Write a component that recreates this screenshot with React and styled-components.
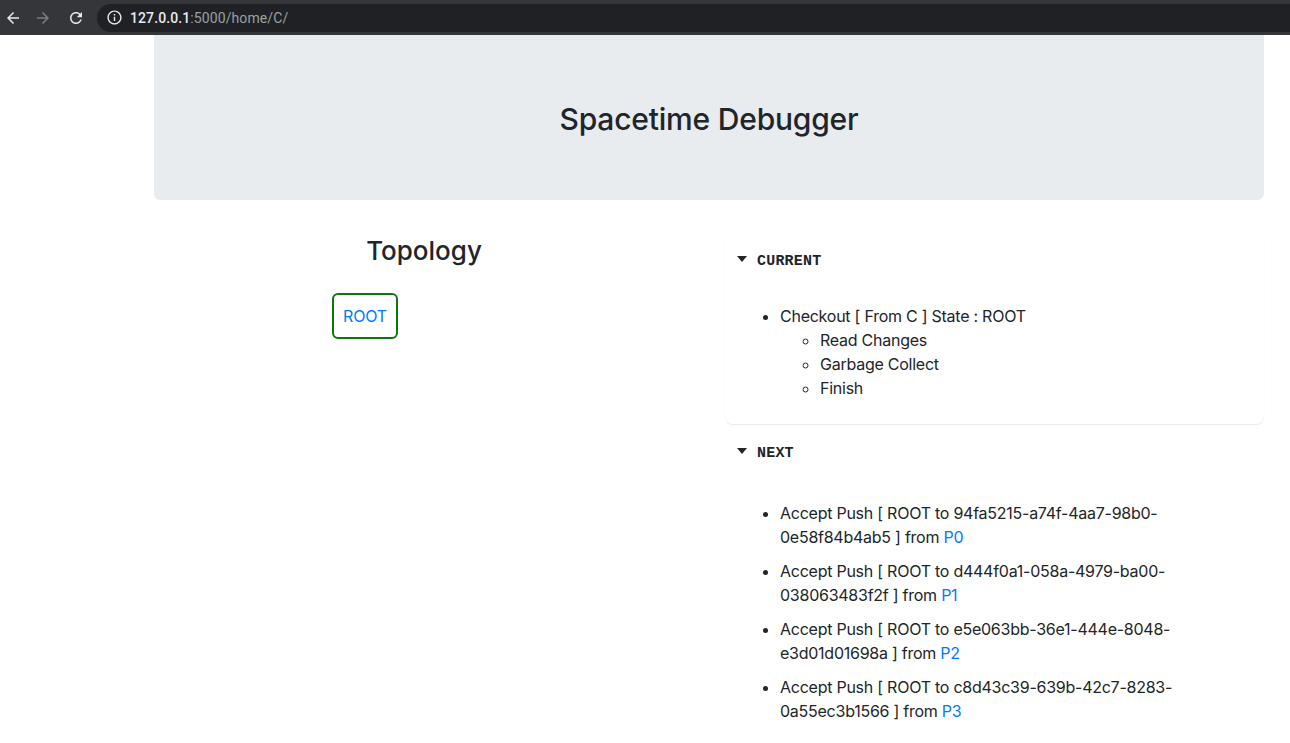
import React from 'react';
import styled, { createGlobalStyle } from 'styled-components';

const GlobalStyle = createGlobalStyle`
  body {
    margin: 0;
    background: #ffffff;
    color: #212529;
    font-family: Inter, "Noto Sans", sans-serif;
    font-size: 16px;
    line-height: 24px;
  }
`;

const BrowserBar = styled.div`
  height: 35px;
  box-sizing: border-box;
  background: #35363a;
  display: flex;
  align-items: center;
  padding-left: 0;
`;

const NavButton = styled.button`
  width: 26px;
  height: 28px;
  margin-right: ${(props) => props.gap || 2}px;
  border: none;
  background: transparent;
  padding: 0;
  display: flex;
  align-items: center;
  justify-content: center;
  color: ${(props) => (props.dim ? '#7c7e82' : '#e8eaed')};
`;

const AddressField = styled.div`
  flex: 1;
  height: 28px;
  margin-left: 6px;
  background: #202124;
  border-radius: 14px 0 0 14px;
  display: flex;
  align-items: center;
  padding-left: 9px;
  color: #9aa0a6;
  font-family: Roboto, "Noto Sans", sans-serif;
  font-size: 14px;
  letter-spacing: 0.1px;
`;

const InfoIcon = styled.span`
  display: flex;
  color: #e8eaed;
  margin-right: 7px;
`;

const Host = styled.span`
  color: #e8eaed;
  font-weight: 500;
`;

const Jumbotron = styled.header`
  margin-left: 154px;
  width: 1110px;
  background: #e9ecef;
  border-radius: 0 0 6px 6px;
  padding: 65px 0 61px;
  text-align: center;
`;

const Title = styled.h1`
  margin: 0;
  font-size: 30px;
  line-height: 39px;
  font-weight: 500;
  color: #212529;
  letter-spacing: -0.2px;
`;

const Row = styled.main`
  margin-left: 154px;
  width: 1110px;
  margin-top: 33px;
  display: grid;
  grid-template-columns: 540px 539px;
  column-gap: 31px;
  align-items: start;
`;

const GraphColumn = styled.section`
  text-align: center;
`;

const SectionTitle = styled.h3`
  margin: 2px 0 0;
  font-size: 26px;
  line-height: 32px;
  font-weight: 500;
`;

const Canvas = styled.div`
  margin-top: 26px;
  text-align: left;
  height: 200px;
`;

const Node = styled.a`
  display: inline-flex;
  align-items: center;
  justify-content: center;
  margin-left: 178px;
  width: 66px;
  height: 46px;
  box-sizing: border-box;
  border: 2px solid #0b7a0b;
  border-radius: 6px;
  color: #007bff;
  font-size: 16px;
  letter-spacing: -0.2px;
  text-decoration: none;
`;

const Panel = styled.section`
  display: flex;
  flex-direction: column;
  margin-top: -1px;
`;

const Card = styled.details`
  padding: 16px 12px ${(props) => props.bottom}px;
  border-radius: 0 0 8px 8px;
  box-shadow: ${(props) => (props.edge ? '0 1px 1px rgba(0, 0, 0, 0.09)' : 'none')};
`;

const Summary = styled.summary`
  list-style: none;
  display: flex;
  align-items: center;
  margin-top: 2px;
  font-family: "Liberation Mono", "DejaVu Sans Mono", monospace;
  font-weight: 700;
  font-size: 15px;
  line-height: 24px;
  letter-spacing: 0.2px;
  cursor: pointer;

  &::-webkit-details-marker {
    display: none;
  }

  &::before {
    content: '';
    width: 0;
    height: 0;
    border-left: 5px solid transparent;
    border-right: 5px solid transparent;
    border-top: 6px solid #212529;
    margin-right: 10px;
    margin-bottom: 6px;
  }
`;

const List = styled.ul`
  margin: ${(props) => props.top}px 0 0;
  padding-left: 43px;
  max-width: 430px;
  list-style: disc;
  letter-spacing: -0.25px;
`;

const SubList = styled.ul`
  margin: 0;
  padding-left: 40px;
  list-style: circle;
`;

const Item = styled.li`
  margin-bottom: ${(props) => props.space || 0}px;
`;

const Link = styled.a`
  color: #007bff;
  text-decoration: none;
`;

const pushes = [
  { to: '94fa5215-a74f-4aa7-98b0-0e58f84b4ab5', from: 'P0' },
  { to: 'd444f0a1-058a-4979-ba00-038063483f2f', from: 'P1' },
  { to: 'e5e063bb-36e1-444e-8048-e3d01d01698a', from: 'P2' },
  { to: 'c8d43c39-639b-42c7-8283-0a55ec3b1566', from: 'P3' },
];

const Icon = ({ d, size = 18 }) => (
  <svg width={size} height={size} viewBox="0 0 24 24" fill="currentColor">
    <path d={d} />
  </svg>
);

export default function App() {
  return (
    <>
      <GlobalStyle />
      <BrowserBar>
        <NavButton gap={4}>
          <Icon d="M20 11H7.83l5.59-5.59L12 4l-8 8 8 8 1.41-1.41L7.83 13H20v-2z" />
        </NavButton>
        <NavButton dim gap={7}>
          <Icon d="M12 4l-1.41 1.41L16.17 11H4v2h12.17l-5.58 5.59L12 20l8-8z" />
        </NavButton>
        <NavButton>
          <Icon d="M17.65 6.35C16.2 4.9 14.21 4 12 4c-4.42 0-7.99 3.58-7.99 8s3.57 8 7.99 8c3.730 0 6.84-2.55 7.73-6h-2.08c-.82 2.33-3.04 4-5.65 4-3.31 0-6-2.69-6-6s2.69-6 6-6c1.66 0 3.14.69 4.22 1.78L13 11h7V4l-2.35 2.35z" />
        </NavButton>
        <AddressField>
          <InfoIcon>
            <Icon size={17} d="M11 7h2v2h-2zm0 4h2v6h-2zm1-9C6.48 2 2 6.48 2 12s4.48 10 10 10 10-4.48 10-10S17.52 2 12 2zm0 18c-4.41 0-8-3.59-8-8s3.59-8 8-8 8 3.590 8 8-3.59 8-8 8z" />
          </InfoIcon>
          <Host>127.0.0.1</Host>:5000/home/C/
        </AddressField>
      </BrowserBar>

      <Jumbotron>
        <Title>Spacetime Debugger</Title>
      </Jumbotron>

      <Row>
        <GraphColumn>
          <SectionTitle>Topology</SectionTitle>
          <Canvas>
            <Node href="#">ROOT</Node>
          </Canvas>
        </GraphColumn>

        <Panel>
          <Card open bottom={24} edge>
            <Summary>CURRENT</Summary>
            <List top={30}>
              <Item>
                Checkout [ From C ] State : ROOT
                <SubList>
                  <Item>Read Changes</Item>
                  <Item>Garbage Collect</Item>
                  <Item>Finish</Item>
                </SubList>
              </Item>
            </List>
          </Card>

          <Card open bottom={0}>
            <Summary>NEXT</Summary>
            <List top={35}>
              {pushes.map((p) => (
                <Item key={p.from} space={10}>
                  Accept Push [ ROOT to {p.to} ] from <Link href="#">{p.from}</Link>
                </Item>
              ))}
            </List>
          </Card>
        </Panel>
      </Row>
    </>
  );
}
